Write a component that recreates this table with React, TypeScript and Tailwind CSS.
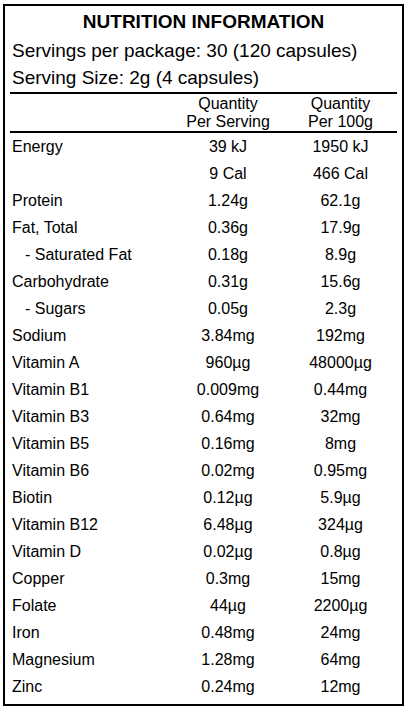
import React from "react";

type Row = { name: string; serving: string; per100: string; indent?: boolean };

const rows: Row[] = [
  { name: "Energy", serving: "39 kJ", per100: "1950 kJ" },
  { name: "", serving: "9 Cal", per100: "466 Cal" },
  { name: "Protein", serving: "1.24g", per100: "62.1g" },
  { name: "Fat, Total", serving: "0.36g", per100: "17.9g" },
  { name: "- Saturated Fat", serving: "0.18g", per100: "8.9g", indent: true },
  { name: "Carbohydrate", serving: "0.31g", per100: "15.6g" },
  { name: "- Sugars", serving: "0.05g", per100: "2.3g", indent: true },
  { name: "Sodium", serving: "3.84mg", per100: "192mg" },
  { name: "Vitamin A", serving: "960µg", per100: "48000µg" },
  { name: "Vitamin B1", serving: "0.009mg", per100: "0.44mg" },
  { name: "Vitamin B3", serving: "0.64mg", per100: "32mg" },
  { name: "Vitamin B5", serving: "0.16mg", per100: "8mg" },
  { name: "Vitamin B6", serving: "0.02mg", per100: "0.95mg" },
  { name: "Biotin", serving: "0.12µg", per100: "5.9µg" },
  { name: "Vitamin B12", serving: "6.48µg", per100: "324µg" },
  { name: "Vitamin D", serving: "0.02µg", per100: "0.8µg" },
  { name: "Copper", serving: "0.3mg", per100: "15mg" },
  { name: "Folate", serving: "44µg", per100: "2200µg" },
  { name: "Iron", serving: "0.48mg", per100: "24mg" },
  { name: "Magnesium", serving: "1.28mg", per100: "64mg" },
  { name: "Zinc", serving: "0.24mg", per100: "12mg" },
];

export default function App() {
  return (
    <div
      className="w-[408px] h-[709px] bg-white pt-[4px] pl-[3px] text-black"
      style={{ fontFamily: '"Liberation Sans", Arial, sans-serif' }}
    >
      <div className="w-[401px] h-[702px] border-2 border-black px-[5px]">
        <div className="h-[31px] leading-[31px] text-center text-[19px] font-bold">
          NUTRITION INFORMATION
        </div>
        <div className="h-[27px] leading-[27px] text-[19px] pl-[2px] whitespace-nowrap">
          Servings per package: 30 (120 capsules)
        </div>
        <div className="h-[27px] leading-[27px] text-[19px] pl-[2px] whitespace-nowrap">
          Serving Size: 2g (4 capsules)
        </div>
        <div className="mt-[1px] h-[2px] bg-black" />
        <div className="grid grid-cols-[162px_112px_113px] text-[16px] leading-[18px] pt-[1px] h-[37px]">
          <div />
          <div className="text-center">
            Quantity
            <br />
            Per Serving
          </div>
          <div className="text-center">
            Quantity
            <br />
            Per 100g
          </div>
        </div>
        <div className="h-[2px] bg-black" />
        <div className="flex flex-col">
          {rows.map((r, i) => (
            <div
              key={i}
              className="grid grid-cols-[162px_112px_113px] h-[27px] leading-[27px] text-[16px] whitespace-nowrap"
            >
              <div className={r.indent ? "pl-[15px]" : "pl-[2px]"}>{r.name}</div>
              <div className="text-center">{r.serving}</div>
              <div className="text-center">{r.per100}</div>
            </div>
          ))}
        </div>
      </div>
    </div>
  );
}
